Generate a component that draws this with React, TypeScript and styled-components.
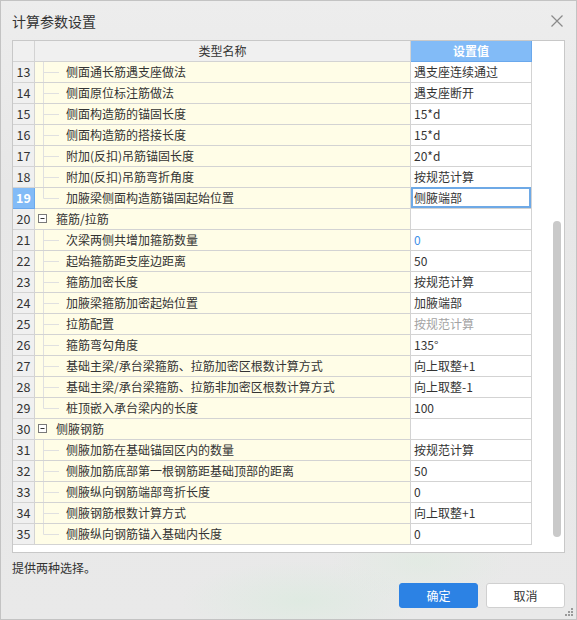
import React from "react";
import styled, { createGlobalStyle } from "styled-components";

const GlobalStyle = createGlobalStyle`
  html, body { margin: 0; padding: 0; background: #ffffff; }
  body { font-family: "Noto Sans CJK SC", "Noto Sans", sans-serif; color: #333; }
  * { box-sizing: border-box; }
`;

const Dialog = styled.div`
  position: relative;
  width: 577px;
  height: 620px;
  border: 1px solid #c3c3c3;
  background:
    radial-gradient(ellipse 120px 40px at 300px 600px, rgba(215, 235, 220, 0.55), rgba(215, 235, 220, 0) 100%),
    radial-gradient(ellipse 90px 40px at 420px 560px, rgba(220, 236, 222, 0.5), rgba(220, 236, 222, 0) 100%),
    linear-gradient(180deg, #ededed 0%, #e7e7e7 30%, #e9e9e9 100%);
  display: flex;
  flex-direction: column;
`;

const TitleBar = styled.div`
  height: 39px;
  display: flex;
  align-items: center;
  justify-content: space-between;
  padding: 0 12px 0 11px;
`;

const Title = styled.div`
  font-size: 14px;
  color: #333;
  line-height: 20px;
`;

const CloseButton = styled.button`
  width: 14px;
  height: 14px;
  padding: 0;
  border: none;
  background: transparent;
  display: flex;
  align-items: center;
  justify-content: center;
`;

const Frame = styled.div`
  margin: 0 11px;
  height: 513px;
  border: 1px solid #c8c8c8;
  background: #fff;
  display: flex;
  overflow: hidden;
`;

const Grid = styled.div`
  width: 519px;
  flex: none;
  display: flex;
  flex-direction: column;
`;

const Row = styled.div`
  display: flex;
  height: 21px;
  flex: none;
`;

const NumCell = styled.div<{ $selected?: boolean; $header?: boolean }>`
  width: 22px;
  height: 21px;
  border-right: 1px solid ${(p) => (p.$selected ? "#6aa8ec" : "#d3d3d3")};
  border-bottom: 1px solid ${(p) => (p.$selected ? "#6aa8ec" : "#d3d3d3")};
  background: ${(p) => (p.$selected ? "#82bbf7" : "#f0f0f0")};
  color: ${(p) => (p.$selected ? "#fff" : "#333")};
  font-weight: ${(p) => (p.$selected ? 700 : 400)};
  font-size: 12.5px;
  line-height: 20px;
  text-align: center;
`;

const HeaderCell = styled.div<{ $accent?: boolean; $w: number }>`
  width: ${(p) => p.$w}px;
  height: 21px;
  border-right: 1px solid ${(p) => (p.$accent ? "#6aa8ec" : "#d3d3d3")};
  border-bottom: 1px solid ${(p) => (p.$accent ? "#6aa8ec" : "#d3d3d3")};
  background: ${(p) => (p.$accent ? "#82bbf7" : "#f0f0f0")};
  color: ${(p) => (p.$accent ? "#fff" : "#333")};
  font-weight: ${(p) => (p.$accent ? 700 : 400)};
  font-size: 12px;
  line-height: 20px;
  text-align: center;
`;

const NameCell = styled.div`
  width: 376px;
  height: 21px;
  border-right: 1px solid #d3d3d3;
  border-bottom: 1px solid #d3d3d3;
  background: #fffde7;
  display: flex;
  align-items: center;
  font-size: 12px;
  line-height: 20px;
  white-space: nowrap;
  overflow: hidden;
`;

const NameText = styled.span<{ $group?: boolean }>`
  margin-left: ${(p) => (p.$group ? 9 : 7)}px;
  color: #333;
`;

const ValueCell = styled.div<{ $selected?: boolean; $tone?: "blue" | "gray" }>`
  width: 121px;
  border-right: 1px solid #d3d3d3;
  border-bottom: 1px solid #d3d3d3;
  background: #fff;
  font-size: 12px;
  padding-left: 3px;
  white-space: nowrap;
  color: ${(p) => (p.$tone === "blue" ? "#3d8fe8" : p.$tone === "gray" ? "#a3a3a3" : "#333")};
  box-shadow: ${(p) => (p.$selected ? "inset 0 0 0 2px #6ea9e6" : "none")};
  margin-top: ${(p) => (p.$selected ? "-1px" : "0")};
  height: ${(p) => (p.$selected ? "22px" : "21px")};
  line-height: ${(p) => (p.$selected ? "22px" : "20px")};
`;

const ScrollTrack = styled.div`
  flex: 1;
  display: flex;
  flex-direction: column;
  padding: 180px 0 0 21px;
`;

const ScrollThumb = styled.div`
  width: 8px;
  height: 316px;
  border-radius: 4px;
  background: #c9c9c9;
`;

const Hint = styled.div`
  margin: 6px 0 0 11px;
  font-size: 12px;
  line-height: 18px;
  color: #333;
`;

const ButtonRow = styled.div`
  display: flex;
  justify-content: flex-end;
  gap: 8px;
  margin-top: 6px;
  padding-right: 11px;
`;

const Button = styled.button<{ $primary?: boolean }>`
  width: 79px;
  height: 25px;
  border-radius: 3px;
  font-family: "Noto Sans CJK SC", sans-serif;
  font-size: 12px;
  line-height: 23px;
  padding: 0;
  border: 1px solid ${(p) => (p.$primary ? "#2c82e4" : "#d0d0d0")};
  background: ${(p) => (p.$primary ? "#2c82e4" : "#fff")};
  color: ${(p) => (p.$primary ? "#fff" : "#333")};
`;

const Grip = styled.svg`
  position: absolute;
  right: 2px;
  bottom: 2px;
`;

type Item =
  | { n: number; kind: "group"; name: string }
  | { n: number; kind: "item"; name: string; value: string; last?: boolean; tone?: "blue" | "gray"; selected?: boolean };

const items: Item[] = [
  { n: 13, kind: "item", name: "侧面通长筋遇支座做法", value: "遇支座连续通过" },
  { n: 14, kind: "item", name: "侧面原位标注筋做法", value: "遇支座断开" },
  { n: 15, kind: "item", name: "侧面构造筋的锚固长度", value: "15*d" },
  { n: 16, kind: "item", name: "侧面构造筋的搭接长度", value: "15*d" },
  { n: 17, kind: "item", name: "附加(反扣)吊筋锚固长度", value: "20*d" },
  { n: 18, kind: "item", name: "附加(反扣)吊筋弯折角度", value: "按规范计算" },
  { n: 19, kind: "item", name: "加腋梁侧面构造筋锚固起始位置", value: "侧腋端部", last: true, selected: true },
  { n: 20, kind: "group", name: "箍筋/拉筋" },
  { n: 21, kind: "item", name: "次梁两侧共增加箍筋数量", value: "0", tone: "blue" },
  { n: 22, kind: "item", name: "起始箍筋距支座边距离", value: "50" },
  { n: 23, kind: "item", name: "箍筋加密长度", value: "按规范计算" },
  { n: 24, kind: "item", name: "加腋梁箍筋加密起始位置", value: "加腋端部" },
  { n: 25, kind: "item", name: "拉筋配置", value: "按规范计算", tone: "gray" },
  { n: 26, kind: "item", name: "箍筋弯勾角度", value: "135°" },
  { n: 27, kind: "item", name: "基础主梁/承台梁箍筋、拉筋加密区根数计算方式", value: "向上取整+1" },
  { n: 28, kind: "item", name: "基础主梁/承台梁箍筋、拉筋非加密区根数计算方式", value: "向上取整-1" },
  { n: 29, kind: "item", name: "桩顶嵌入承台梁内的长度", value: "100", last: true },
  { n: 30, kind: "group", name: "侧腋钢筋" },
  { n: 31, kind: "item", name: "侧腋加筋在基础锚固区内的数量", value: "按规范计算" },
  { n: 32, kind: "item", name: "侧腋加筋底部第一根钢筋距基础顶部的距离", value: "50" },
  { n: 33, kind: "item", name: "侧腋纵向钢筋端部弯折长度", value: "0" },
  { n: 34, kind: "item", name: "侧腋钢筋根数计算方式", value: "向上取整+1" },
  { n: 35, kind: "item", name: "侧腋纵向钢筋锚入基础内长度", value: "0", last: true },
];

const TreeConnector = ({ last }: { last?: boolean }) => (
  <svg width="24" height="20" viewBox="0 0 24 20" style={{ flex: "none" }}>
    <line x1="8.5" y1="0" x2="8.5" y2={last ? 10.5 : 20} stroke="#e0e0e0" strokeWidth="1" />
    <line x1="8.5" y1="10.5" x2="24" y2="10.5" stroke="#e0e0e0" strokeWidth="1" />
  </svg>
);

const CollapseBox = () => (
  <svg width="12" height="20" viewBox="0 0 12 20" style={{ flex: "none" }}>
    <rect x="3.5" y="5.5" width="8" height="8" fill="#fff" stroke="#7a7a7a" strokeWidth="1" />
    <line x1="5.5" y1="9.5" x2="9.5" y2="9.5" stroke="#333" strokeWidth="1" />
  </svg>
);

export default function App() {
  return (
    <>
      <GlobalStyle />
      <Dialog>
        <TitleBar>
          <Title>计算参数设置</Title>
          <CloseButton aria-label="关闭">
            <svg width="12" height="12" viewBox="0 0 12 12">
              <path d="M0.5 0.5 L11.5 11.5 M11.5 0.5 L0.5 11.5" stroke="#8a8a8a" strokeWidth="1.2" fill="none" />
            </svg>
          </CloseButton>
        </TitleBar>
        <Frame>
          <Grid>
            <Row>
              <HeaderCell $w={22} />
              <HeaderCell $w={376}>类型名称</HeaderCell>
              <HeaderCell $w={121} $accent>设置值</HeaderCell>
            </Row>
            {items.map((it) => (
              <Row key={it.n}>
                <NumCell $selected={it.kind === "item" && it.selected}>{it.n}</NumCell>
                <NameCell>
                  {it.kind === "group" ? <CollapseBox /> : <TreeConnector last={it.last} />}
                  <NameText $group={it.kind === "group"}>{it.name}</NameText>
                </NameCell>
                {it.kind === "group" ? (
                  <ValueCell />
                ) : (
                  <ValueCell $selected={it.selected} $tone={it.tone}>
                    {it.value}
                  </ValueCell>
                )}
              </Row>
            ))}
          </Grid>
          <ScrollTrack>
            <ScrollThumb />
          </ScrollTrack>
        </Frame>
        <Hint>提供两种选择。</Hint>
        <ButtonRow>
          <Button $primary>确定</Button>
          <Button>取消</Button>
        </ButtonRow>
        <Grip width="10" height="10" viewBox="0 0 10 10">
          {[
            [8, 2],
            [5, 5],
            [8, 5],
            [2, 8],
            [5, 8],
            [8, 8],
          ].map(([x, y]) => (
            <rect key={`${x}-${y}`} x={x - 1} y={y - 1} width="2" height="2" fill="#9a9a9a" />
          ))}
        </Grip>
      </Dialog>
    </>
  );
}
